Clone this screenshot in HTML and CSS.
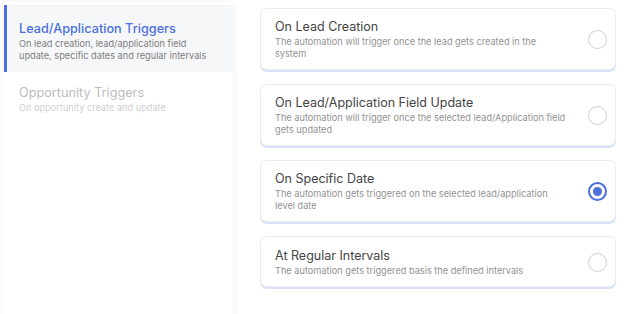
FILE: index.html
```html
<!DOCTYPE html>
<html>
<head>
<meta charset="utf-8">
<link rel="stylesheet" href="styles.css">
</head>
<body>
<div class="page">
  <aside class="sidebar">
    <div class="side-item active">
      <div class="side-title">Lead/Application Triggers</div>
      <div class="side-desc">On lead creation, lead/application field update, specific dates and regular intervals</div>
    </div>
    <div class="side-item muted">
      <div class="side-title">Opportunity Triggers</div>
      <div class="side-desc">On opportunity create and update</div>
    </div>
  </aside>
  <main class="cards">
    <div class="card">
      <div class="card-text">
        <div class="card-title">On Lead Creation</div>
        <div class="card-desc">The automation will trigger once the lead gets created in the system</div>
      </div>
      <span class="radio"></span>
    </div>
    <div class="card">
      <div class="card-text">
        <div class="card-title">On Lead/Application Field Update</div>
        <div class="card-desc">The automation will trigger once the selected lead/Application field gets updated</div>
      </div>
      <span class="radio"></span>
    </div>
    <div class="card">
      <div class="card-text">
        <div class="card-title">On Specific Date</div>
        <div class="card-desc">The automation gets triggered on the selected lead/application level date</div>
      </div>
      <span class="radio checked"></span>
    </div>
    <div class="card">
      <div class="card-text">
        <div class="card-title">At Regular Intervals</div>
        <div class="card-desc">The automation gets triggered basis the defined intervals</div>
      </div>
      <span class="radio"></span>
    </div>
  </main>
</div>
</body>
</html>
```
FILE: styles.css
```css
* { box-sizing: border-box; }
html, body { margin: 0; padding: 0; background: #fff; }
body {
  font-family: Inter, "Noto Sans", sans-serif;
  width: 624px;
  height: 314px;
  overflow: hidden;
}
.page {
  display: flex;
  align-items: flex-start;
  padding-left: 3px;
}
.sidebar {
  width: 230px;
  height: 320px;
  margin-top: 2px;
  padding-top: 3px;
  background: #fff;
  box-shadow: 0 0 6px rgba(0, 0, 0, 0.07);
}
.side-item {
  padding: 16px 12px 12px 12px;
  border-left: 3px solid transparent;
  margin-left: 1px;
}
.side-item.active {
  background: #f6f7f9;
  border-left-color: #4b70dd;
  height: 67px;
}
.side-item.muted {
  padding-top: 13px;
}
.side-title {
  font-size: 12.7px;
  line-height: 16px;
  font-weight: 500;
  color: #4b70dd;
}
.side-desc {
  font-size: 9.2px;
  line-height: 12px;
  color: #7d7d7d;
  margin-top: 1px;
}
.muted .side-title { color: #bcbcbc; font-weight: 400; }
.muted .side-desc { color: #d0d0d0; }
.cards {
  margin-left: 27px;
  margin-top: 8px;
  width: 356px;
  display: flex;
  flex-direction: column;
  gap: 14px;
}
.card {
  display: flex;
  align-items: center;
  justify-content: space-between;
  background: #fff;
  border: 1px solid #ececec;
  border-radius: 7px;
  box-shadow: 0 2px 0 #d9e1f6;
  padding: 10px 8px 9px 14px;
  min-height: 62px;
}
.card:last-child { min-height: 51px; }
.card-title {
  font-size: 12.5px;
  line-height: 16px;
  color: #444;
}
.card-desc {
  font-size: 9.2px;
  line-height: 12px;
  color: #929292;
  width: 293px;
  margin-top: 1px;
}
.radio {
  width: 19px;
  height: 19px;
  border-radius: 50%;
  border: 1px solid #cfcfcf;
  flex-shrink: 0;
  position: relative;
}
.radio.checked {
  border: 2px solid #4b70dd;
}
.radio.checked::after {
  content: "";
  position: absolute;
  left: 3px;
  top: 3px;
  width: 9px;
  height: 9px;
  border-radius: 50%;
  background: #4b70dd;
}
```
